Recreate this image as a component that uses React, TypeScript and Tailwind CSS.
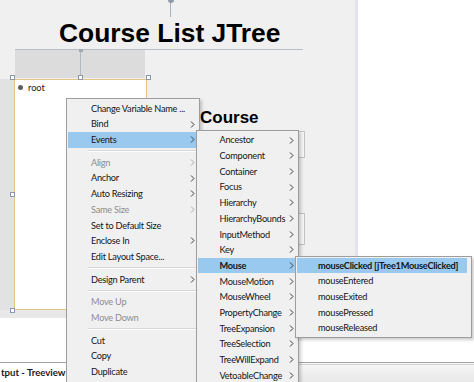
import React from "react";

const MENU_FONT = "font-['Lato','Noto_Sans',sans-serif]";

type Item =
  | { sep: true }
  | { label: string; arrow?: boolean; disabled?: boolean; active?: boolean; bold?: boolean };

const Chevron = ({ disabled }: { disabled?: boolean }) => (
  <svg width="5" height="7" viewBox="0 0 5 7" className="shrink-0">
    <path d="M1 0.5L4 3.5L1 6.5" fill="none" stroke={disabled ? "#a8a8a8" : "#3c3c3c"} strokeWidth="1" />
  </svg>
);

function Menu({ items, pl, sepLeft }: { items: Item[]; pl: string; sepLeft: string }) {
  return (
    <>
      {items.map((it, i) =>
        "sep" in it ? (
          <div key={i} className="h-[7px] flex flex-col justify-center">
            <div className={`${sepLeft} mr-[2px] h-px bg-[#d7d7d7]`} />
            <div className={`${sepLeft} mr-[2px] h-px bg-white`} />
          </div>
        ) : (
          <div
            key={i}
            className={`mx-px h-[15.7px] flex items-center ${pl} pr-[3px] ${
              it.active ? "bg-[#99c9ef]" : ""
            }`}
          >
            <span
              className={`flex-1 whitespace-nowrap text-[9.2px] tracking-[-0.25px] leading-none ${
                it.disabled ? "text-[#8d8d8d]" : "text-[#151515]"
              } ${it.bold ? "font-bold" : ""}`}
            >
              {it.label}
            </span>
            {it.arrow && <Chevron disabled={it.disabled} />}
          </div>
        )
      )}
    </>
  );
}

const menu1: Item[] = [
  { label: "Change Variable Name ..." },
  { label: "Bind", arrow: true },
  { label: "Events", arrow: true, active: true },
  { sep: true },
  { label: "Align", arrow: true, disabled: true },
  { label: "Anchor", arrow: true },
  { label: "Auto Resizing", arrow: true },
  { label: "Same Size", arrow: true, disabled: true },
  { label: "Set to Default Size" },
  { label: "Enclose In", arrow: true },
  { label: "Edit Layout Space..." },
  { sep: true },
  { label: "Design Parent", arrow: true },
  { sep: true },
  { label: "Move Up", disabled: true },
  { label: "Move Down", disabled: true },
  { sep: true },
  { label: "Cut" },
  { label: "Copy" },
  { label: "Duplicate" },
];

const menu2: Item[] = [
  { label: "Ancestor", arrow: true },
  { label: "Component", arrow: true },
  { label: "Container", arrow: true },
  { label: "Focus", arrow: true },
  { label: "Hierarchy", arrow: true },
  { label: "HierarchyBounds", arrow: true },
  { label: "InputMethod", arrow: true },
  { label: "Key", arrow: true },
  { label: "Mouse", arrow: true, active: true, bold: true },
  { label: "MouseMotion", arrow: true },
  { label: "MouseWheel", arrow: true },
  { label: "PropertyChange", arrow: true },
  { label: "TreeExpansion", arrow: true },
  { label: "TreeSelection", arrow: true },
  { label: "TreeWillExpand", arrow: true },
  { label: "VetoableChange", arrow: true },
];

const menu3: Item[] = [
  { label: "mouseClicked [jTree1MouseClicked]", active: true, bold: true },
  { label: "mouseEntered" },
  { label: "mouseExited" },
  { label: "mousePressed" },
  { label: "mouseReleased" },
];

const Handle = ({ cls }: { cls: string }) => (
  <div className={`absolute w-[5px] h-[5px] bg-white border border-[#8c98a8] ${cls}`} />
);

export default function App() {
  return (
    <div className={`relative w-[474px] h-[382px] overflow-hidden bg-white flex flex-col ${MENU_FONT}`}>
      {/* main designer area */}
      <div className="flex h-[362px]">
        <div className="w-[358px] flex flex-col">
          {/* the form */}
          <div className="relative h-[318px] bg-[#f0f0f0] border-r-[3px] border-[#e2e2f2] flex flex-col">
            {/* top connector */}
            <div className="relative h-[17px] ml-[170px] w-px bg-[#a9b1bb]">
              <div className="absolute left-[-2.5px] top-[-3px] w-[6px] h-[6px] rounded-full bg-[#8f9aa6]" />
            </div>
            {/* title */}
            <div className="h-[32px] pl-[59px] text-[26.4px] leading-[32px] font-bold text-black font-['Liberation_Sans',Arial,sans-serif] whitespace-nowrap">
              Course List JTree
            </div>
            <div className="ml-[15px] w-[288px] h-px bg-[#b3bfcc]" />

            {/* body row */}
            <div className="flex h-[260px]">
              {/* left strip */}
              <div className="w-[14px] flex flex-col">
                <div className="h-[29px]" />
                <div className="flex-1 bg-[#e2e2e2]" />
              </div>
              {/* tree column */}
              <div className="w-[133px] flex flex-col">
                <div className="relative ml-px w-[130px] h-[28px] bg-[#dcdcdc]">
                  <div className="absolute left-[65px] top-0 w-px h-[27px] bg-[#b2b9c2]" />
                  <div className="absolute left-[63.5px] top-[-1px] w-[4px] h-[3px] bg-[#a0a8b2]" />
                </div>
                <div className="h-px" />
                <div className="flex-1 bg-white border-[1.5px] border-[#e3c684]">
                  <div className="flex items-center gap-[5px] pl-[3px] pt-[3px]">
                    <div className="w-[5px] h-[5px] rounded-full bg-[#5f5f5f]" />
                    <span className="text-[9.2px] leading-none text-[#1a1a1a]">root</span>
                  </div>
                </div>
              </div>
              {/* other form components */}
              <div className="ml-[53px] flex flex-col">
                <div className="mt-[56px] h-[24px] text-[17px] leading-[24px] font-bold text-black font-['Liberation_Sans',Arial,sans-serif]">
                  Course
                </div>
                <div className="mt-px ml-[50px] w-[55px] h-[27px] bg-[#f6f6f6] border border-[#c2c2c2]" />
                <div className="mt-[55px] ml-[50px] w-[55px] h-[32px] bg-[#f6f6f6] border border-[#c2c2c2]" />
              </div>
            </div>
            <div className="w-[150px] h-[8px] bg-[#e8e8e8]" />

            {/* selection handles */}
            <Handle cls="left-[10px] top-[75px]" />
            <Handle cls="left-[77.5px] top-[75px] border-[#8a8ad0]" />
            <Handle cls="left-[145.5px] top-[75px]" />
            <Handle cls="left-[10px] top-[192px]" />
            <Handle cls="left-[10px] top-[308px]" />
          </div>
          <div className="flex-1 bg-white" />
        </div>
        <div className="flex-1 bg-white" />
      </div>

      {/* bottom output bar */}
      <div className="h-[20px] flex border-t border-[#a4a4a4] bg-gradient-to-b from-[#f6f6f6] to-[#e8e8e8]">
        <div className="h-full bg-white pl-px pr-2 flex items-center">
          <span className="text-[9.6px] font-bold text-[#1a1a1a] leading-none whitespace-nowrap">
            tput - Treeview (Run)
          </span>
        </div>
        <div className="flex-1 border-t border-[#d4d4d4] mt-px" />
      </div>

      {/* context menu */}
      <div className="absolute left-[66px] top-[98px] w-[134px] h-[300px] bg-[#f0f0f0] border border-[#9e9e9e] pt-[1.5px] shadow-[2px_2px_3px_rgba(0,0,0,0.2)]">
        <Menu items={menu1} pl="pl-[23px]" sepLeft="ml-[21px]" />
      </div>
      {/* events submenu */}
      <div className="absolute left-[195.5px] top-[130px] w-[103px] h-[270px] bg-[#f0f0f0] border border-[#9e9e9e] pt-[1.2px] shadow-[2px_2px_3px_rgba(0,0,0,0.2)]">
        <Menu items={menu2} pl="pl-[22px]" sepLeft="ml-[20px]" />
      </div>
      {/* mouse submenu */}
      <div className="absolute left-[295px] top-[256px] w-[177px] h-[82px] bg-[#f0f0f0] border border-[#9e9e9e] pt-[0.5px] shadow-[2px_2px_3px_rgba(0,0,0,0.2)]">
        <div className="mr-[3px]">
          <Menu items={menu3} pl="pl-[21px]" sepLeft="ml-[20px]" />
        </div>
      </div>
    </div>
  );
}
